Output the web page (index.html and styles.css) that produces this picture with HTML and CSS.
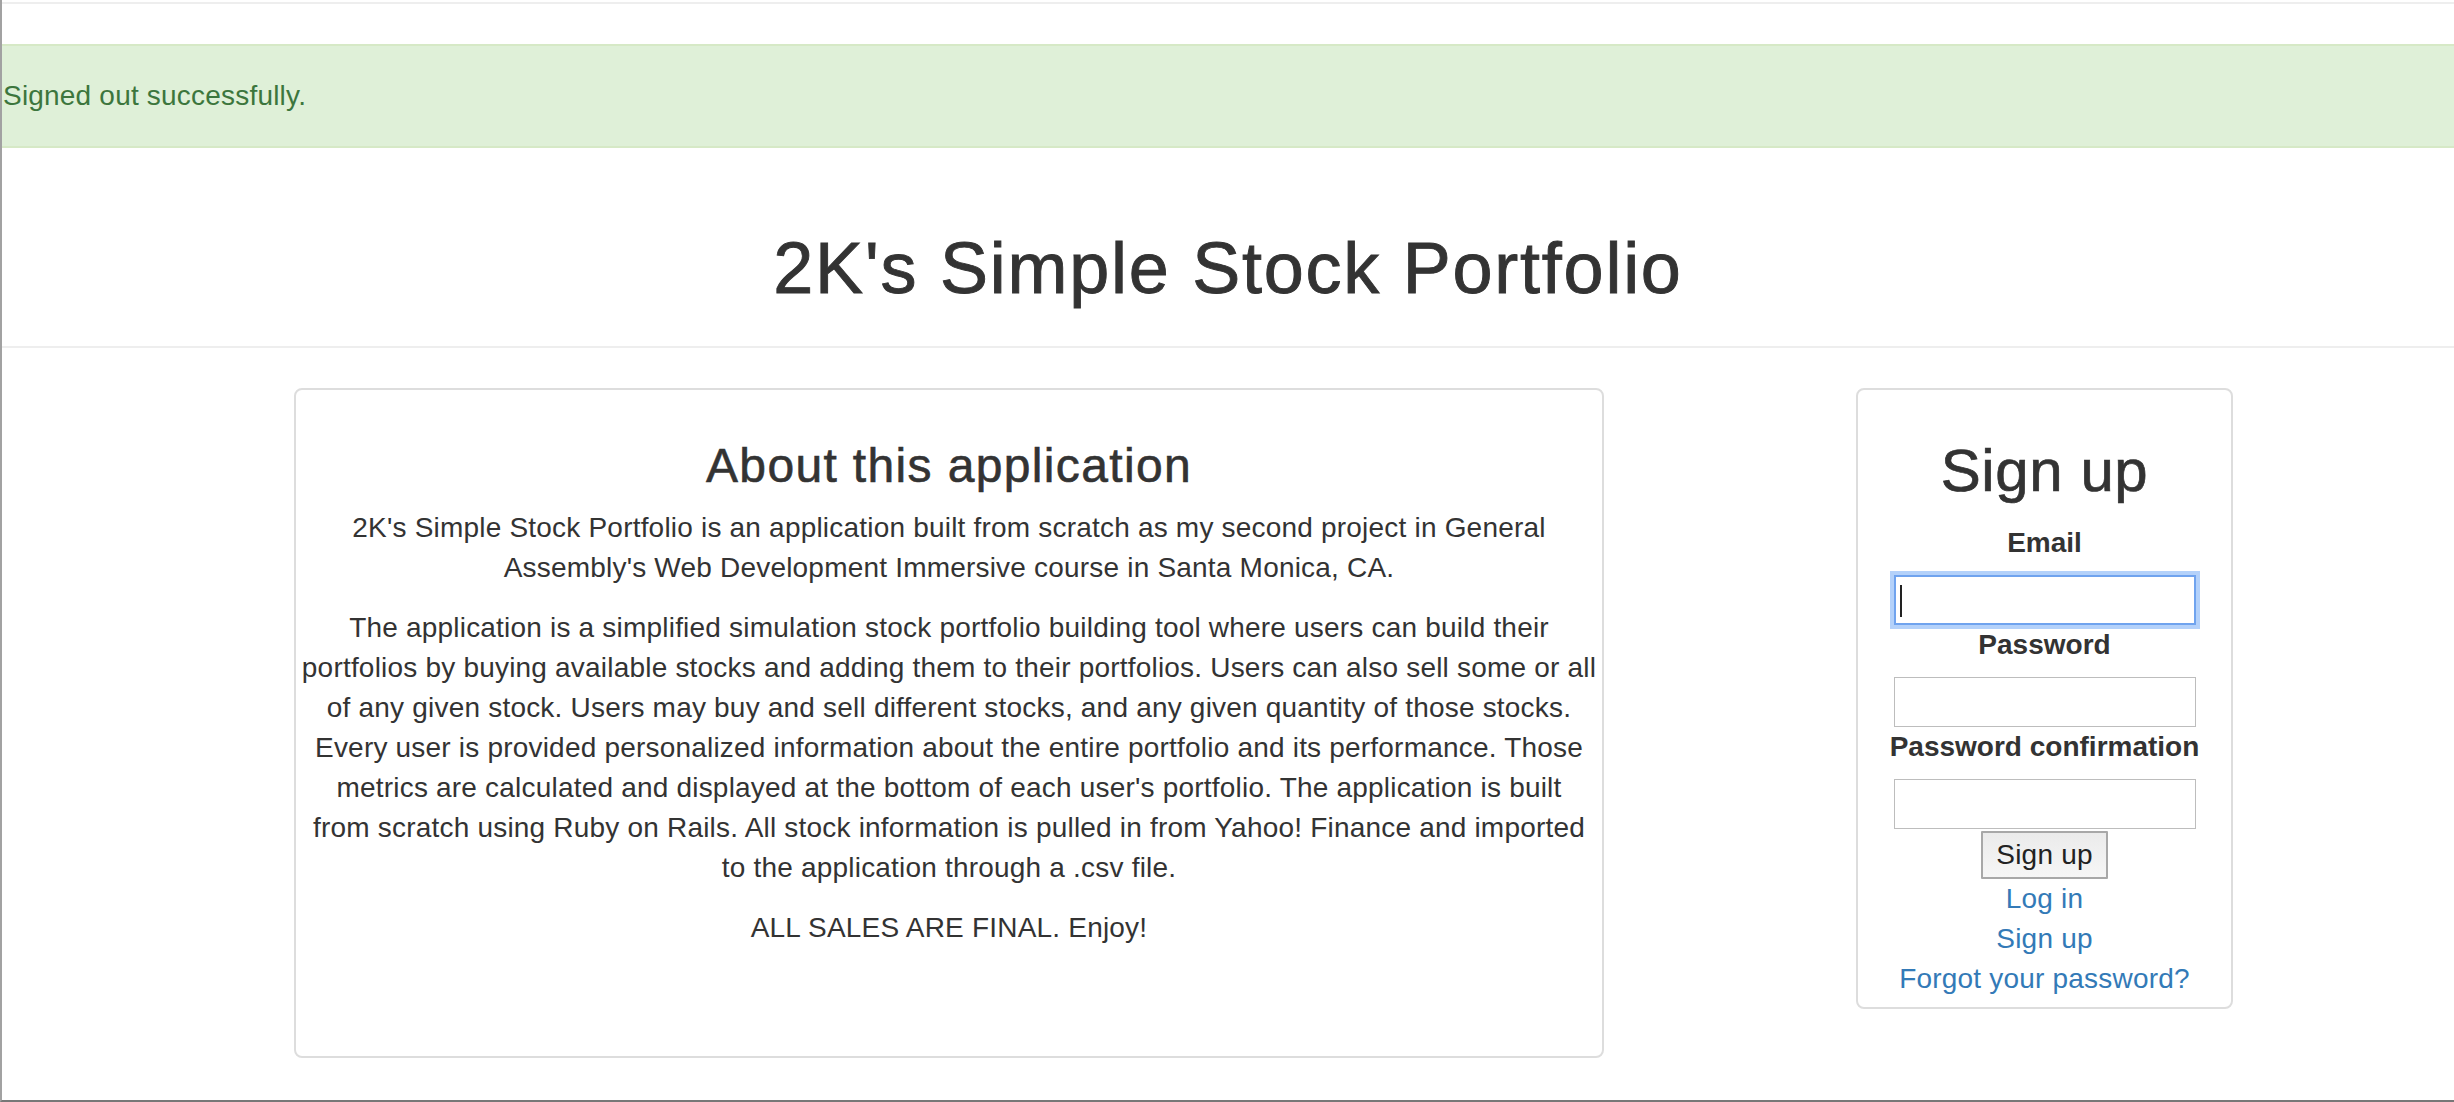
FILE: index.html
```html
<!DOCTYPE html>
<html>
<head>
<meta charset="utf-8">
<title>2K's Simple Stock Portfolio</title>
<link rel="stylesheet" href="styles.css">
</head>
<body>
<div class="frame">
  <div class="topline"></div>
  <div class="alert">Signed out successfully.</div>
  <h1 class="title">2K's Simple Stock Portfolio</h1>
  <hr class="rule">
  <div class="row">
    <section class="card about">
      <h3 class="about-title">About this application</h3>
      <p>2K's Simple Stock Portfolio is an application built from scratch as my second project in General<br>Assembly's Web Development Immersive course in Santa Monica, CA.</p>
      <p>The application is a simplified simulation stock portfolio building tool where users can build their<br>portfolios by buying available stocks and adding them to their portfolios. Users can also sell some or all<br>of any given stock. Users may buy and sell different stocks, and any given quantity of those stocks.<br>Every user is provided personalized information about the entire portfolio and its performance. Those<br>metrics are calculated and displayed at the bottom of each user's portfolio. The application is built<br>from scratch using Ruby on Rails. All stock information is pulled in from Yahoo! Finance and imported<br>to the application through a .csv file.</p>
      <p>ALL SALES ARE FINAL. Enjoy!</p>
    </section>
    <section class="card signup">
      <h2 class="signup-title">Sign up</h2>
      <form class="signup-form">
        <label class="field-label" for="email">Email</label>
        <div class="input-wrap">
          <input class="field focused" id="email" type="email">
          <span class="caret"></span>
        </div>
        <label class="field-label" for="pw">Password</label>
        <input class="field" id="pw" type="password">
        <label class="field-label" for="pwc">Password confirmation</label>
        <input class="field" id="pwc" type="password">
        <button class="btn" type="button">Sign up</button>
      </form>
      <a class="link" href="#">Log in</a>
      <a class="link" href="#">Sign up</a>
      <a class="link" href="#">Forgot your password?</a>
    </section>
  </div>
</div>
</body>
</html>
```

FILE: styles.css
```css
html, body {
  margin: 0;
  padding: 0;
  background: #fff;
}

body {
  font-family: "Liberation Sans", Arial, Helvetica, sans-serif;
  font-size: 28px;
  line-height: 40px;
  letter-spacing: 0.2px;
  color: #333;
}

.frame {
  box-sizing: border-box;
  height: 1102px;
  border-left: 2px solid #a2a2a2;
  border-bottom: 2px solid #777;
  overflow: hidden;
}

.topline {
  margin-top: 2px;
  height: 2px;
  background: #eee;
}

.alert {
  margin-top: 40px;
  background: #dff0d8;
  border-top: 2px solid #d6e9c6;
  border-bottom: 2px solid #d6e9c6;
  color: #3c763d;
  padding: 30px 0 30px 1px;
  line-height: 40px;
}

.title {
  margin: 81px 0 0;
  font-size: 72px;
  line-height: 79px;
  font-weight: normal;
  text-align: center;
  letter-spacing: 1.75px;
  color: #333;
  -webkit-text-stroke: 0.9px #333;
}

.rule {
  margin: 38px 0 40px;
  border: 0;
  border-top: 2px solid #eee;
  height: 0;
}

.row {
  display: flex;
  align-items: flex-start;
  padding-left: 292px;
  gap: 252px;
}

.card {
  box-sizing: border-box;
  border: 2px solid #ddd;
  border-radius: 8px;
  text-align: center;
}

.about {
  width: 1310px;
  height: 670px;
  padding: 10px 0;
}

.about-title {
  margin: 39px 0 16px;
  font-size: 48px;
  line-height: 53px;
  font-weight: normal;
  letter-spacing: 1.35px;
  -webkit-text-stroke: 0.6px #333;
}

.about p {
  margin: 0 0 20px;
  white-space: nowrap;
}

.signup {
  width: 377px;
  padding: 10px 0 8px;
}

.signup-title {
  margin: 38px 0 19px;
  font-size: 60px;
  line-height: 66px;
  font-weight: normal;
  letter-spacing: 0.6px;
  -webkit-text-stroke: 0.7px #333;
}

.signup-form {
  display: flex;
  flex-direction: column;
  align-items: center;
}

.field-label {
  display: block;
  font-weight: bold;
  margin-bottom: 12px;
  line-height: 40px;
  letter-spacing: 0;
}

.input-wrap {
  position: relative;
  width: 302px;
  height: 50px;
}

.field {
  display: block;
  box-sizing: border-box;
  width: 302px;
  height: 50px;
  margin: 0;
  border: 1px solid #bdbdbd;
  border-radius: 0;
  background: #fff;
  font: inherit;
  padding: 0 8px;
  outline: none;
}

.field.focused {
  border: 2px solid #6fa3ee;
  box-shadow: 0 0 0 4px rgba(128, 178, 246, 0.6);
}

.caret {
  position: absolute;
  left: 6px;
  top: 10px;
  width: 2px;
  height: 32px;
  background: #222;
}

.btn {
  box-sizing: border-box;
  margin-top: 2px;
  width: 127px;
  height: 48px;
  padding: 0;
  border: 2px solid #a8a8a8;
  border-radius: 1px;
  background: linear-gradient(#ebebeb, #f6f6f6);
  font-family: "Liberation Sans", Arial, Helvetica, sans-serif;
  font-size: 28px;
  line-height: 40px;
  letter-spacing: 0.2px;
  color: #222;
}

.link {
  display: block;
  color: #337ab7;
  text-decoration: none;
  line-height: 40px;
}
```
